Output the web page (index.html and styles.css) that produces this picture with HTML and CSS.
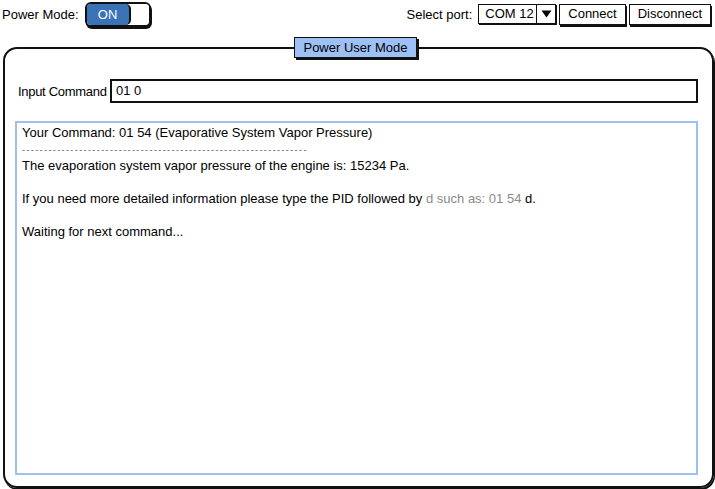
FILE: index.html
```html
<!DOCTYPE html>
<html lang="en">
<head>
<meta charset="utf-8">
<title>Power User Mode</title>
<link rel="stylesheet" href="styles.css">
</head>
<body>
<header class="topbar">
  <div class="power">
    <span class="label">Power Mode:</span>
    <div class="toggle"><span class="toggle-on">ON</span><span class="knob"></span></div>
  </div>
  <div class="port">
    <span class="label">Select port:</span>
    <div class="select">
      <span class="select-value">COM 12</span>
      <span class="select-arrow"><svg width="11" height="8" viewBox="0 0 11 8"><path d="M0.5 0.5 L10.5 0.5 L5.5 7.5 Z" fill="#000"/></svg></span>
    </div>
    <button class="btn">Connect</button>
    <button class="btn">Disconnect</button>
  </div>
</header>
<fieldset class="panel">
  <legend class="tab">Power User Mode</legend>
  <div class="cmd-row">
    <label class="cmd-label">Input Command</label>
    <div class="cmd-input">01 0</div>
  </div>
  <div class="console">
    <div class="line">Your Command: 01 54 (Evaporative System Vapor Pressure)</div>
    <div class="line dashes">-----------------------------------------------------------------</div>
    <div class="line">The evaporation system vapor pressure of the engine is: 15234 Pa.</div>
    <div class="line blank"></div>
    <div class="line">If you need more detailed information please type the PID followed by <span class="hint">d such as: 01 54</span> d.</div>
    <div class="line blank"></div>
    <div class="line">Waiting for next command...</div>
  </div>
</fieldset>
</body>
</html>
```

FILE: styles.css
```css
html, body {
  margin: 0;
  padding: 0;
  background: #fff;
}
body {
  font-family: "Liberation Sans", Arial, sans-serif;
  font-size: 13px;
  color: #000;
  width: 715px;
  height: 489px;
  overflow: hidden;
}
.topbar {
  display: flex;
  justify-content: space-between;
  align-items: center;
  height: 28px;
  padding: 0 4px 0 2px;
}
.power, .port {
  display: flex;
  align-items: center;
}
.power .label {
  margin-right: 6px;
}
.toggle {
  display: flex;
  width: 62px;
  height: 21px;
  border: 2px solid #111;
  border-radius: 6px;
  background: #fff;
  box-shadow: 1px 2px 0 #111;
  overflow: hidden;
  margin-top: 1px;
}
.toggle-on {
  flex: 0 0 42px;
  background: #3a72b6;
  color: #fff;
  text-align: center;
  line-height: 21px;
  font-size: 13px;
  border-right: 2px solid #111;
  border-radius: 0 5px 5px 0;
}
.knob {
  flex: 1;
  background: #fff;
}
.port .label {
  margin-right: 6px;
}
.select {
  display: flex;
  height: 18px;
  border: 1.5px solid #111;
  box-shadow: 1px 1px 0 #111;
  background: #fff;
  margin-right: 3px;
}
.select-value {
  width: 57px;
  padding-left: 6px;
  line-height: 18px;
  box-sizing: border-box;
}
.select-arrow {
  width: 18px;
  border-left: 1.5px solid #111;
  display: flex;
  align-items: center;
  justify-content: center;
}
.btn {
  font: inherit;
  color: #000;
  background: #fff;
  border: 1.5px solid #111;
  box-shadow: 1px 2px 0 #111;
  height: 21px;
  padding: 0 8px;
  margin: 0 3px 0 0;
  line-height: 18px;
}
.btn:last-child {
  margin-right: 0;
}
.panel {
  margin: 9px 1px 0 3px;
  padding: 21px 14px 11px 10px;
  border: 2px solid #111;
  border-radius: 14px;
  box-shadow: 1px 2px 0 #111;
  min-width: 0;
  height: 451px;
  box-sizing: border-box;
  display: flex;
  flex-direction: column;
}
.tab {
  margin: 0 auto;
  padding: 0 8px;
  height: 21px;
  line-height: 20px;
  box-sizing: border-box;
  background: #9dc1f4;
  border: 1.5px solid #111;
  box-shadow: 2px 2px 0 #111;
  position: relative;
  left: -1px;
}
.cmd-row {
  display: flex;
  align-items: center;
  margin-bottom: 18px;
}
.cmd-label {
  flex: 0 0 95px;
  padding-left: 3px;
  box-sizing: border-box;
  white-space: nowrap;
  letter-spacing: -0.3px;
}
.cmd-input {
  flex: 1;
  height: 24px;
  box-sizing: border-box;
  border: 2px solid #111;
  line-height: 20px;
  padding-left: 4px;
}
.console {
  flex: 1;
  border: 2px solid #9dbff1;
  padding: 2px 5px 0;
  box-sizing: border-box;
}
.line {
  line-height: 16.5px;
  height: 16.5px;
  white-space: nowrap;
}
.dashes {
  color: #555;
  font-size: 9px;
  letter-spacing: 1.4px;
  overflow: hidden;
  width: 290px;
}
.hint {
  color: #8a8a8a;
}
```
